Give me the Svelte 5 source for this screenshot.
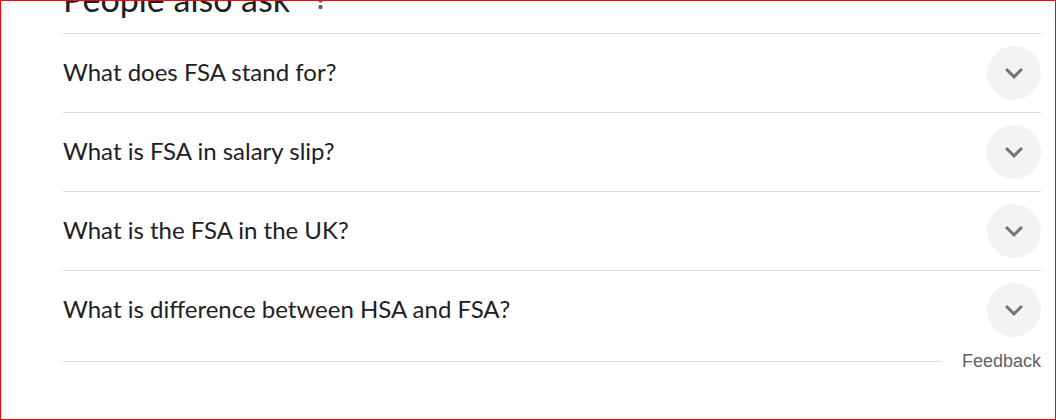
<script>
  let open = $state(-1);
  const questions = [
    'What does FSA stand for?',
    'What is FSA in salary slip?',
    'What is the FSA in the UK?',
    'What is difference between HSA and FSA?'
  ];
</script>

<main>
  <header>
    <h2>People also ask</h2>
    <button class="more" aria-label="About this result">
      <svg width="24" height="24" viewBox="0 0 24 24" fill="#5f6368">
        <circle cx="12.5" cy="7.5" r="2.2" />
        <circle cx="12.5" cy="13.5" r="2.2" />
        <circle cx="12.5" cy="20" r="2.2" />
      </svg>
    </button>
  </header>

  {#each questions as question, i}
    <button class="row" aria-expanded={open === i} onclick={() => (open = open === i ? -1 : i)}>
      <span class="question">{question}</span>
      <span class="toggle" class:flipped={open === i}>
        <svg width="36" height="36" viewBox="0 0 24 24" fill="#757575">
          <path d="M7.41 8.59L12 13.17l4.59-4.58L18 10l-6 6-6-6 1.41-1.41z" />
        </svg>
      </span>
    </button>
  {/each}

  <footer>
    <span class="line"></span>
    <a href="#feedback">Feedback</a>
  </footer>
</main>

<style>
  :global(body) {
    margin: 0;
    background: #fff;
  }
  main {
    box-sizing: border-box;
    min-height: 100vh;
    padding: 0 14px 0 62px;
    border: 1px solid #f00;
    overflow: hidden;
    color: #202124;
    font-family: 'Google Sans', Lato, sans-serif;
  }
  header {
    display: flex;
    align-items: center;
    gap: 18px;
    height: 40px;
    margin-top: -22px;
    padding-bottom: 14px;
  }
  h2 {
    margin: 0;
    font-size: 34px;
    line-height: 40px;
    font-weight: 400;
  }
  button {
    border: 0;
    padding: 0;
    background: none;
    color: inherit;
    font: inherit;
    cursor: pointer;
  }
  .more {
    display: flex;
  }
  .row {
    display: flex;
    align-items: center;
    justify-content: space-between;
    width: 100%;
    padding: 12px 0;
    border-top: 1px solid #dadce0;
    text-align: left;
  }
  .question {
    padding-bottom: 2px;
    font-size: 24px;
    line-height: 32px;
  }
  .toggle {
    display: flex;
    flex: none;
    align-items: center;
    justify-content: center;
    width: 54px;
    height: 54px;
    border-radius: 50%;
    background: #f1f3f4;
  }
  .flipped svg {
    transform: rotate(180deg);
  }
  footer {
    display: flex;
    align-items: center;
    gap: 21px;
  }
  .line {
    flex: 1;
    height: 1px;
    background: #dadce0;
  }
  a {
    color: #5f6368;
    font-family: Arial, 'Liberation Sans', sans-serif;
    font-size: 18px;
    line-height: 24px;
    text-decoration: none;
  }
</style>
